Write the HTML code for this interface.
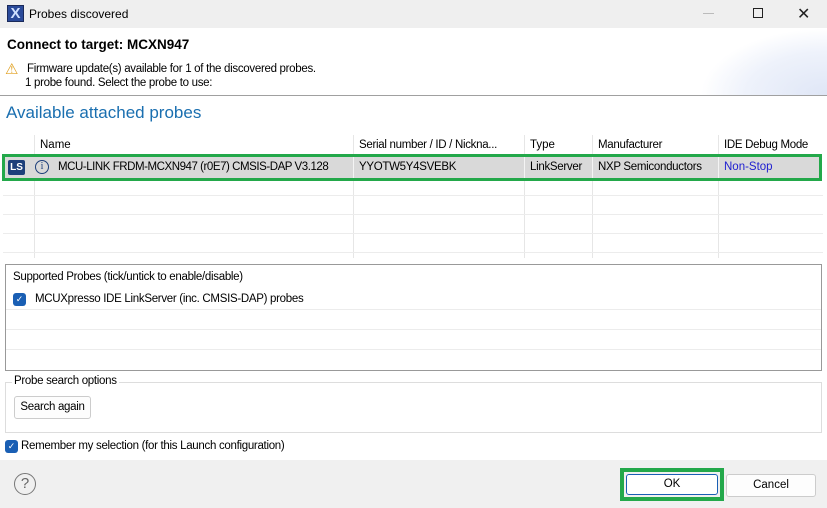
<!DOCTYPE html>
<html><head><style>
*{box-sizing:border-box;margin:0;padding:0}
body{width:827px;height:508px;overflow:hidden;background:#fff;font-family:"Liberation Sans",sans-serif;font-size:11.5px;color:#000;position:relative}
.a{position:absolute;white-space:nowrap}
.cb{position:absolute;width:13px;height:13px;background:#1a5fb4;border-radius:3px;color:#fff;font-size:9px;line-height:13px;text-align:center}
.vl{position:absolute;width:1px;background:#e6e6e6}
.hl{position:absolute;height:1px;background:#ececec}
.n{letter-spacing:-0.3px}
</style></head><body>
<div class="a" style="left:0;top:0;width:827px;height:28px;background:#efefef"></div>
<div class="a" style="left:7px;top:5px;width:17px;height:17px;background:#2a4a9a;border:1px solid #1a2a5a;color:#cfe0ff;font-weight:bold;font-size:15px;line-height:15px;text-align:center">X</div>
<div class="a" style="left:29px;top:7px;font-size:12px">Probes discovered</div>
<div class="a" style="left:703px;top:13px;width:11px;height:1px;background:#bbb"></div>
<div class="a" style="left:753px;top:8px;width:10px;height:10px;border:1px solid #222"></div>
<div class="a" style="left:797px;top:4px;font-size:16px;color:#222">✕</div>
<div class="a" style="left:700px;top:28px;width:127px;height:67px;background:radial-gradient(ellipse at 100% 100%,#dfe6f6 0,#eef2fb 45%,#fff 70%)"></div>
<div class="a" style="left:7px;top:37px;font-size:13.5px;font-weight:bold">Connect to target: MCXN947</div>
<div class="a" style="left:5px;top:60px;font-size:15px;color:#e0a020">⚠</div>
<div class="a n" style="left:27px;top:63px">Firmware update(s) available for 1 of the discovered probes.</div>
<div class="a n" style="left:25px;top:77px">1 probe found. Select the probe to use:</div>
<div class="a" style="left:0;top:95px;width:827px;height:1px;background:#a0a0a0"></div>
<div class="a" style="left:6px;top:103px;font-size:17px;color:#1a6fb0">Available attached probes</div>
<div class="vl" style="left:34px;top:135px;height:123px"></div>
<div class="vl" style="left:353px;top:135px;height:123px"></div>
<div class="vl" style="left:524px;top:135px;height:123px"></div>
<div class="vl" style="left:592px;top:135px;height:123px"></div>
<div class="vl" style="left:718px;top:135px;height:123px"></div>
<div class="a" style="left:40px;top:139px">Name</div>
<div class="a n" style="left:359px;top:139px">Serial number / ID / Nickna...</div>
<div class="a" style="left:530px;top:139px">Type</div>
<div class="a n" style="left:598px;top:139px">Manufacturer</div>
<div class="a n" style="left:724px;top:139px">IDE Debug Mode</div>
<div class="hl" style="left:3px;top:195px;width:820px"></div>
<div class="hl" style="left:3px;top:214px;width:820px"></div>
<div class="hl" style="left:3px;top:233px;width:820px"></div>
<div class="hl" style="left:3px;top:252px;width:820px"></div>
<div class="a" style="left:2px;top:154px;width:820px;height:27px;border:3px solid #23a84a;background:#d9d9d9"></div>
<div class="vl" style="left:353px;top:157px;height:21px;background:#f4f4f4"></div>
<div class="vl" style="left:524px;top:157px;height:21px;background:#f4f4f4"></div>
<div class="vl" style="left:592px;top:157px;height:21px;background:#f4f4f4"></div>
<div class="vl" style="left:718px;top:157px;height:21px;background:#f4f4f4"></div>
<div class="a" style="left:8px;top:160px;width:17px;height:15px;background:#1d3f7a;color:#fff;font-weight:bold;font-size:10px;line-height:15px;text-align:center;border-radius:2px">LS</div>
<div class="a" style="left:35px;top:160px;width:14px;height:14px;border:1.3px solid #1d3f7a;border-radius:50%;color:#1d3f7a;font-size:10px;line-height:12px;text-align:center;font-family:'Liberation Serif',serif">i</div>
<div class="a n" style="left:58px;top:161px;letter-spacing:-0.45px">MCU-LINK FRDM-MCXN947 (r0E7) CMSIS-DAP V3.128</div>
<div class="a n" style="left:359px;top:161px">YYOTW5Y4SVEBK</div>
<div class="a n" style="left:530px;top:161px">LinkServer</div>
<div class="a n" style="left:598px;top:161px">NXP Semiconductors</div>
<div class="a" style="left:724px;top:161px;color:#2020d0">Non-Stop</div>
<div class="a" style="left:5px;top:264px;width:817px;height:107px;border:1px solid #999"></div>
<div class="a n" style="left:13px;top:271px">Supported Probes (tick/untick to enable/disable)</div>
<div class="cb" style="left:13px;top:293px">✓</div>
<div class="a n" style="left:35px;top:293px">MCUXpresso IDE LinkServer (inc. CMSIS-DAP) probes</div>
<div class="hl" style="left:6px;top:309px;width:815px"></div>
<div class="hl" style="left:6px;top:329px;width:815px"></div>
<div class="hl" style="left:6px;top:349px;width:815px"></div>
<div class="a" style="left:5px;top:382px;width:817px;height:51px;border:1px solid #ddd"></div>
<div class="a n" style="left:12px;top:375px;background:#fff;padding:0 2px">Probe search options</div>
<div class="a n" style="left:14px;top:396px;width:77px;height:23px;border:1px solid #ccc;border-radius:3px;background:#fdfdfd;text-align:center;line-height:21px">Search again</div>
<div class="cb" style="left:5px;top:440px">✓</div>
<div class="a n" style="left:21px;top:440px">Remember my selection (for this Launch configuration)</div>
<div class="a" style="left:0;top:460px;width:827px;height:48px;background:#f0f0f0"></div>
<div class="a" style="left:14px;top:473px;width:22px;height:22px;border:1.5px solid #777;border-radius:50%;color:#666;font-size:15px;line-height:19px;text-align:center">?</div>
<div class="a" style="left:620px;top:468px;width:104px;height:33px;border:4px solid #23a84a"></div>
<div class="a" style="left:626px;top:474px;width:92px;height:21px;border:1px solid #1a5fb4;border-radius:3px;background:#fff;text-align:center;line-height:19px">OK</div>
<div class="a" style="left:726px;top:474px;width:90px;height:23px;border:1px solid #ccc;border-radius:3px;background:#fdfdfd;text-align:center;line-height:21px">Cancel</div>
</body></html>
